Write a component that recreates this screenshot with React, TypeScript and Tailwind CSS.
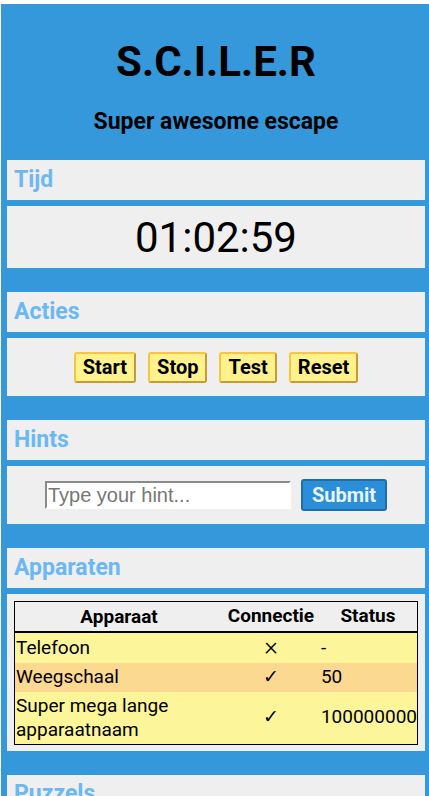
import React from 'react'

const font = { fontFamily: 'Roboto, "DejaVu Sans", sans-serif' }

function SectionHeader({ title }: { title: string }) {
  return (
    <div className="flex h-[40px] items-center bg-[#efefef] px-[7px]">
      <h2 className="text-[23px] font-bold text-[#6cb8f2]">{title}</h2>
    </div>
  )
}

function Section({ title, children }: { title: string; children: React.ReactNode }) {
  return (
    <section className="flex flex-col gap-[6px]">
      <SectionHeader title={title} />
      <div className="bg-[#efefef]">{children}</div>
    </section>
  )
}

const buttons = ['Start', 'Stop', 'Test', 'Reset']

const devices = [
  { name: 'Telefoon', conn: '×', status: '-', bg: 'bg-[#fdf59a]' },
  { name: 'Weegschaal', conn: '✓', status: '50', bg: 'bg-[#fcd990]' },
  { name: 'Super mega lange apparaatnaam', conn: '✓', status: '100000000', bg: 'bg-[#fdf59a]' },
]

export default function App() {
  return (
    <div className="min-h-[796px] bg-white pl-[1px] pt-[4px]" style={font}>
      <div className="flex flex-col bg-[#3498db] pb-[40px] pl-[6px] pr-[4px]">
        <header className="flex flex-col items-center pb-[24px] pt-[32px]">
          <h1 className="text-[42px] font-bold leading-[52px] text-black">S.C.I.L.E.R</h1>
          <p className="mt-[20px] text-[23px] font-bold leading-[28px] text-black">Super awesome escape</p>
        </header>

        <div className="flex flex-col gap-[24px]">
          <Section title="Tijd">
            <div className="flex h-[62px] items-center justify-center text-[42px] text-black">01:02:59</div>
          </Section>

          <Section title="Acties">
            <div className="flex h-[58px] items-center justify-center gap-[12px]">
              {buttons.map((b) => (
                <button
                  key={b}
                  className="h-[31px] rounded-[3px] border-2 border-t-[#f7c63e] border-l-[#f7c63e] border-b-[#c99a2e] border-r-[#c99a2e] bg-[#fff28c] px-[7px] text-[20px] font-bold leading-none text-black"
                >
                  {b}
                </button>
              ))}
            </div>
          </Section>

          <Section title="Hints">
            <div className="flex h-[58px] items-center justify-center gap-[10px]">
              <input
                placeholder="Type your hint..."
                className="h-[28px] w-[246px] border-2 border-b-white border-l-[#8a8a8a] border-r-white border-t-[#8a8a8a] bg-white px-[1px] text-[20px] text-black placeholder:text-[#777]"
                style={{ fontFamily: '"Liberation Sans", Arial, sans-serif' }}
              />
              <button className="h-[32px] rounded-[3px] border-2 border-[#1f6ea8] bg-[#2a8fd8] px-[9px] text-[20px] font-bold leading-none text-[#eaf4fb]">
                Submit
              </button>
            </div>
          </Section>

          <Section title="Apparaten">
            <div className="px-[7px] pb-[6px] pt-[7px]">
              <table className="w-full border-collapse border border-black text-[19px] text-black">
                <thead>
                  <tr className="border-b-2 border-black bg-[#efefef]">
                    <th className="w-[210px] py-[1px] font-bold leading-[25px]">Apparaat</th>
                    <th className="w-[96px] font-bold">Connectie</th>
                    <th className="font-bold">Status</th>
                  </tr>
                </thead>
                <tbody>
                  {devices.map((d) => (
                    <tr key={d.name} className={d.bg}>
                      <td className="py-[2px] pl-[1px] text-left leading-[24px]">{d.name}</td>
                      <td className="text-center">
                        <span className={d.conn === '×' ? 'text-[26px] font-light leading-none' : ''}>{d.conn}</span>
                      </td>
                      <td className="pl-[2px] text-left">{d.status}</td>
                    </tr>
                  ))}
                </tbody>
              </table>
            </div>
          </Section>

          <Section title="Puzzels">
            <div className="h-[60px]" />
          </Section>
        </div>
      </div>
    </div>
  )
}
